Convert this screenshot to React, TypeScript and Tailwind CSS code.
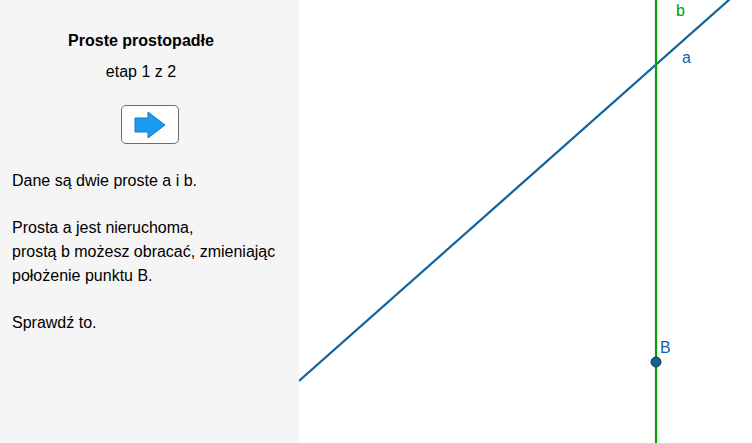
export default function App() {
  const font = { fontFamily: '"Liberation Sans", Arial, sans-serif' };
  return (
    <div className="flex h-[443px] w-[752px] overflow-hidden bg-white" style={font}>
      {/* Panel z opisem */}
      <div className="flex w-[299px] shrink-0 flex-col bg-[#f5f5f5] text-[#000]">
        <div className="flex flex-col items-center pt-[31px]">
          <div className="flex w-full flex-col items-center pr-[17px]">
            <h1 className="text-[16px] font-bold leading-[19px]">Proste prostopadłe</h1>
            <p className="mt-[12px] text-[16px] leading-[19px]">etap 1 z 2</p>
          </div>
          <button className="mt-[24px] flex h-[39px] w-[58px] items-center justify-center rounded-[5px] border-[1.5px] border-[#6b6b6b] bg-white">
            <svg width="32" height="28" viewBox="0 0 32 28">
              <path d="M1 7 H14 V1 L31 14 L14 27 V21 H1 Z" fill="#1a9af0" stroke="#1679c8" strokeWidth="1" />
            </svg>
          </button>
        </div>
        <div className="mt-[25px] pl-[12px] text-[16px] leading-[23.7px]">
          <p>Dane są dwie proste a i b.</p>
          <p>&nbsp;</p>
          <p>Prosta a jest nieruchoma,</p>
          <p>prostą b możesz obracać, zmieniając</p>
          <p>położenie punktu B.</p>
          <p>&nbsp;</p>
          <p>Sprawdź to.</p>
        </div>
      </div>

      {/* Płótno */}
      <div className="relative flex-1">
        <svg width="453" height="443" viewBox="0 0 453 443" className="block">
          <line x1="0" y1="381" x2="440" y2="-9" stroke="#10639f" strokeWidth="2.2" />
          <line x1="357" y1="0" x2="357" y2="443" stroke="#00a600" strokeWidth="2.2" />
          <circle cx="357" cy="362" r="5" fill="#10639f" stroke="#333" strokeWidth="1" />
          <text x="377" y="16" fontSize="16" fill="#009a00" style={font}>b</text>
          <text x="383" y="63" fontSize="16" fill="#10639f" style={font}>a</text>
          <text x="361" y="353" fontSize="16" fill="#10639f" style={font}>B</text>
        </svg>
      </div>
    </div>
  );
}
